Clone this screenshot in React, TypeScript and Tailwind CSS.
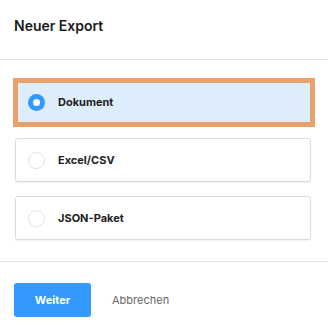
import React from "react";

const font = { fontFamily: "Inter, 'Noto Sans', sans-serif" };

function Radio({ checked }: { checked: boolean }) {
  return checked ? (
    <span className="w-[17px] h-[17px] rounded-full bg-[#3399ff] flex items-center justify-center shrink-0">
      <span className="w-[7px] h-[7px] rounded-full bg-white" />
    </span>
  ) : (
    <span className="w-[17px] h-[17px] rounded-full border border-[#e2e2e2] bg-white shrink-0" />
  );
}

export default function App() {
  return (
    <div className="w-[328px] h-[333px] bg-white flex flex-col" style={font}>
      <div className="h-[60px] pt-[16px] pl-[14px] border-b border-[#e4e4e4] shrink-0">
        <div className="text-[14px] leading-[20px] font-semibold text-[#1a1a1a]">Neuer Export</div>
      </div>
      <div className="flex flex-col pt-[18px]">
        <div className="mx-[13px] h-[49px] border-[5px] border-[#e8a06c] bg-[#ddedfc] flex items-center pl-[10px] gap-[13px]">
          <Radio checked />
          <span className="text-[11px] font-bold text-[#222]">Dokument</span>
        </div>
        <div className="mt-[11px] ml-[15px] mr-[17px] h-[44px] border border-[#dcdcdc] rounded-[3px] bg-white shadow-[0_1px_1px_rgba(0,0,0,0.06)] flex items-center pl-[12px] gap-[13px]">
          <Radio checked={false} />
          <span className="text-[11px] font-bold text-[#222]">Excel/CSV</span>
        </div>
        <div className="mt-[14px] ml-[15px] mr-[17px] h-[44px] border border-[#dcdcdc] rounded-[3px] bg-white shadow-[0_1px_1px_rgba(0,0,0,0.06)] flex items-center pl-[12px] gap-[13px]">
          <Radio checked={false} />
          <span className="text-[11px] font-bold text-[#222]">JSON-Paket</span>
        </div>
      </div>
      <div className="mt-[21px] border-t border-[#e4e4e4]" />
      <div className="mt-[21px] pl-[14px] flex items-center gap-[21px]">
        <button className="w-[77px] h-[34px] rounded-[3px] bg-[#3399ff] text-white text-[11px] font-bold">Weiter</button>
        <span className="text-[11px] text-[#666]">Abbrechen</span>
      </div>
    </div>
  );
}
